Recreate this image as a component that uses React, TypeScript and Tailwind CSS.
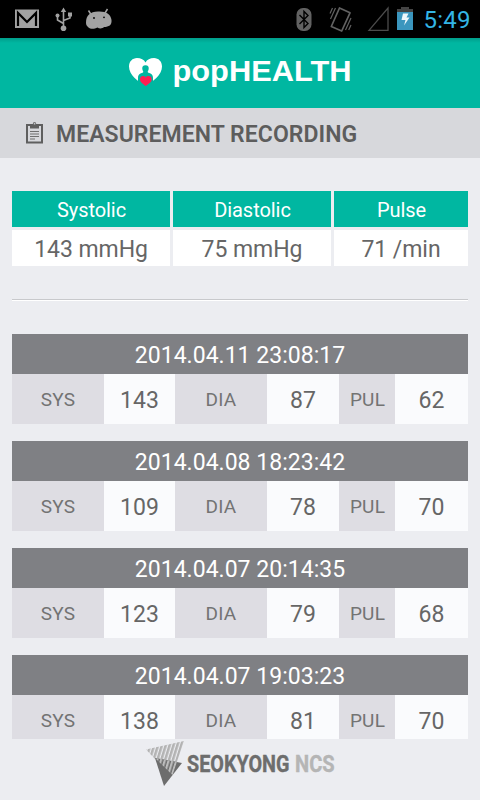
import React from "react";

const records = [
  { date: "2014.04.11 23:08:17", sys: 143, dia: 87, pul: 62 },
  { date: "2014.04.08 18:23:42", sys: 109, dia: 78, pul: 70 },
  { date: "2014.04.07 20:14:35", sys: 123, dia: 79, pul: 68 },
  { date: "2014.04.07 19:03:23", sys: 138, dia: 81, pul: 70 },
];

const summary = [
  { label: "Systolic", value: "143 mmHg" },
  { label: "Diastolic", value: "75 mmHg" },
  { label: "Pulse", value: "71 /min" },
];

function StatusBar() {
  return (
    <div className="h-[38px] shrink-0 bg-black">
      <svg width="480" height="38" viewBox="0 0 480 38" className="block">
        <rect x="15" y="9.5" width="24" height="18.5" fill="#a2a2a2" />
        <path d="M18 26V13L27 22L36 13V26" fill="none" stroke="#000" strokeWidth="2.2" />
        <g fill="none" stroke="#a2a2a2" strokeWidth="1.6">
          <path d="M63.5 27V11M63.5 23.5L57.5 20V16M63.5 20.5L70 18V14" />
        </g>
        <g fill="#a2a2a2">
          <circle cx="63.5" cy="28.3" r="2.8" />
          <path d="M60.8 12L63.5 7.500L66.200 12Z" />
          <circle cx="57.500" cy="15.500" r="2" />
          <rect x="68" y="12.500" width="4" height="4" />
          <path d="M86 22.500C86 15.500 90 11.500 98 11.500C106 11 111 14.500 111.500 20C112 25 109 27 104 27C102 29 99 28.500 97.500 27.500C94 29.500 90 29 88.500 27.500C86.500 26 86 24.500 86 22.500Z" />
        </g>
        <path d="M91 14.500L88.500 10.500M105 13L107.500 9" stroke="#a2a2a2" strokeWidth="1.500" />
        <circle cx="94" cy="18" r="0.900" fill="#000" />
        <circle cx="104" cy="17.300" r="0.900" fill="#000" />

        <rect x="296.500" y="8" width="15" height="23" rx="6.500" fill="#626262" />
        <path d="M299.500 15L308 23.500L304 27.500V11.500L308 15.500L299.500 24" fill="none" stroke="#000" strokeWidth="1.400" />
        <path d="M339.500 8L350 12.800L341.700 31L331.300 26.500Z" fill="none" stroke="#626262" strokeWidth="1.700" strokeLinejoin="round" />
        <path d="M330.500 19L335.500 8M330 13.500L332.500 8M345.500 30L351 18M348.700 30L351 25" stroke="#626262" strokeWidth="1.200" />
        <path d="M369 30.300L388 8V30.300Z" fill="none" stroke="#4c4c4c" strokeWidth="1.300" />
        <rect x="397" y="9" width="16" height="21" fill="#3b96be" />
        <path d="M397 12V9H401V7H409V9H413V12Z" fill="#444" />
        <path d="M403 13.500H408.500L406.500 17.500H409.500L404 25.500L405.500 20H401.500Z" fill="#eef7fb" />
        <text x="423.500" y="28" textLength="47" lengthAdjust="spacing" fontSize="24" fill="#33b5e5" className="font-['Roboto',sans-serif]">5:49</text>
      </svg>
    </div>
  );
}

function Header() {
  return (
    <header className="flex h-[70px] shrink-0 bg-[#00b7a1]">
      <svg width="480" height="70" viewBox="0 0 480 70">
        <defs>
          <linearGradient id="shade" x1="0" y1="0" x2="0" y2="1">
            <stop offset="0" stopColor="#000" stopOpacity="0.14" />
            <stop offset="1" stopColor="#000" stopOpacity="0" />
          </linearGradient>
        </defs>
        <rect width="480" height="5" fill="url(#shade)" />
        <path d="M145.500 49C138 43 129 37 129 28.500C129 23.500 132.500 20 137 20C141 20 144 21.500 145.500 24.500C147 21.500 150 20 154 20C158.500 20 162 23.500 162 28.500C162 37 153 43 145.500 49Z" fill="#fff" />
        <path d="M145.500 27.300C148 27.300 149 29 148.700 31C148.500 33 147 33.500 148 34.500C151 35.500 153 36.500 153 40V44L145.500 50L138 44V40C138 36.500 140 35.500 143 34.500C144 33.500 142.500 33 142.300 31C142 29 143 27.300 145.500 27.300Z" fill="#00b7a1" />
        <path d="M145.700 48C142.500 45.500 140 44 140 41.200C140 37.800 144 37 145.700 39.500C147.400 37 151.700 37.800 151.700 41.200C151.700 44 149 45.500 145.700 48Z" fill="#ff1f52" />
        <text x="172.500" y="43" textLength="179" lengthAdjust="spacingAndGlyphs" fontSize="30" fill="#fff" className="font-['Liberation_Sans',Arial,sans-serif] font-bold">popHEALTH</text>
      </svg>
    </header>
  );
}

function ClipboardIcon() {
  return (
    <svg width="18" height="22" viewBox="0 0 18 22" className="shrink-0">
      <path d="M1 3H16V20.500H1Z" fill="none" stroke="#5f5f5f" strokeWidth="2" />
      <path d="M4 6.500V4L6.500 2.500L7.500 0.300H9.500L10.500 2.500L13 4V6.500Z" fill="#5f5f5f" />
      <rect x="7.800" y="1" width="1.500" height="1.500" fill="#c4c5c9" />
      <path d="M4 9.500H13M4 12H13M4 14.500H13M4 17H9" stroke="#707070" strokeWidth="1.200" />
    </svg>
  );
}

function Footer() {
  return (
    <footer className="flex justify-center">
      <svg width="480" height="61" viewBox="0 0 480 61">
        <defs>
          <pattern id="bars" width="3.700" height="4" patternUnits="userSpaceOnUse" patternTransform="rotate(17)">
            <rect width="2.500" height="4" fill="#b3b3b3" />
          </pattern>
          <pattern id="darkbars" width="3.700" height="4" patternUnits="userSpaceOnUse" patternTransform="rotate(17)">
            <rect width="3.700" height="4" fill="#6d6d6d" />
            <rect width="2.200" height="4" fill="#bcbcbc" />
          </pattern>
        </defs>
        <path d="M146 10.500L184 2L172.500 36L155 20Z" fill="url(#bars)" />
        <path d="M155 19L182 24L164 47Z" fill="#6d6d6d" />
        <path d="M155 19L177 23L172.500 36Z" fill="url(#darkbars)" />
        <text transform="translate(187 33) scale(0.880 1)" textLength="116.500" lengthAdjust="spacingAndGlyphs" fontSize="23.300" fill="#6d6d6d" stroke="#6d6d6d" strokeWidth="0.400" className="font-['Roboto',sans-serif] font-bold">SEOKYONG</text>
        <text transform="translate(295 33) scale(0.880 1)" textLength="45" lengthAdjust="spacingAndGlyphs" fontSize="23.300" fill="#b5b5b5" stroke="#b5b5b5" strokeWidth="0.400" className="font-['Roboto',sans-serif] font-bold">NCS</text>
      </svg>
    </footer>
  );
}

export default function App() {
  return (
    <div className="flex h-[800px] w-[480px] flex-col overflow-hidden bg-[#ecedf1] font-['Roboto',sans-serif] text-[#666]">
      <StatusBar />
      <Header />
      <div className="flex h-[50px] shrink-0 items-center bg-[#d7d8dc] pl-[26px]">
        <ClipboardIcon />
        <h1 className="ml-3 pt-0.5 text-[23px] leading-none font-semibold tracking-[0.05px] whitespace-nowrap text-[#5d5d5d]">MEASUREMENT RECORDING</h1>
      </div>
      <section className="mx-3 mt-[33px] grid shrink-0 grid-cols-[158px_158px_134px] gap-[3px]">
        {summary.map((s) => (
          <div key={s.label} className="flex flex-col gap-[3px] text-center">
            <div className="h-9 bg-[#00b7a1] pl-px text-[20px] leading-[38px] tracking-[-0.05px] text-white">{s.label}</div>
            <div className="h-9 bg-white text-[23px] leading-[39px] tracking-[-0.05px]">{s.value}</div>
          </div>
        ))}
      </section>
      <div className="mx-3 mt-[33px] h-0.5 shrink-0 border-t border-[#c8c9cc] bg-white" />
      <main className="mx-3 mt-[33px] flex h-[405px] shrink-0 flex-col gap-[17px] overflow-hidden">
        {records.map((r) => (
          <article key={r.date} className="shrink-0 text-center">
            <div className="h-10 bg-[#7f8084] text-[23px] leading-[43px] tracking-[0.02px] text-white">{r.date}</div>
            <div className="grid h-[50px] grid-cols-[92px_71px_92px_72px_56px_73px] bg-[#dedde3] text-[23px] leading-[50px]">
              <span className="pt-px text-[19px] tracking-[0.2px] text-[#737373]">SYS</span>
              <span className="h-[50px] bg-[#fafbfd] pt-0.5">{r.sys}</span>
              <span className="pt-px text-[19px] tracking-[0.2px] text-[#737373]">DIA</span>
              <span className="h-[50px] bg-[#fafbfd] pt-0.5">{r.dia}</span>
              <span className="pt-px pl-px text-[19px] tracking-[0.2px] text-[#737373]">PUL</span>
              <span className="h-[50px] bg-[#fafbfd] pt-0.5">{r.pul}</span>
            </div>
          </article>
        ))}
      </main>
      <Footer />
    </div>
  );
}
